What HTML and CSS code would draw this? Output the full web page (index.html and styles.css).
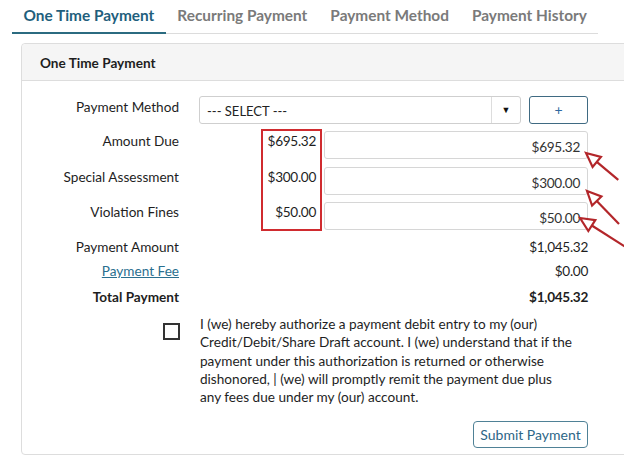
FILE: index.html
```html
<!DOCTYPE html>
<html lang="en">
<head>
<meta charset="utf-8">
<title>One Time Payment</title>
<link rel="stylesheet" href="styles.css">
</head>
<body>
<div class="page">
  <nav class="tabs">
    <a class="tab active" href="#">One Time Payment</a>
    <a class="tab" href="#">Recurring Payment</a>
    <a class="tab" href="#">Payment Method</a>
    <a class="tab" href="#">Payment History</a>
  </nav>

  <section class="panel">
    <header class="panel-head">One Time Payment</header>
    <div class="panel-body">
      <div class="form">
        <div class="label r1">Payment Method</div>
        <div class="method r1">
          <div class="select">
            <span class="select-text">--- SELECT ---</span>
            <span class="select-arrow">&#9660;</span>
          </div>
          <button class="btn-add" type="button">+</button>
        </div>

        <div class="label r2">Amount Due</div>
        <div class="value num r2">$695.32</div>
        <div class="input num r2">$695.32</div>

        <div class="label r3">Special Assessment</div>
        <div class="value num r3">$300.00</div>
        <div class="input num r3">$300.00</div>

        <div class="label r4">Violation Fines</div>
        <div class="value num r4">$50.00</div>
        <div class="input num r4">$50.00</div>

        <div class="highlight"></div>

        <div class="label r5">Payment Amount</div>
        <div class="total num r5">$1,045.32</div>

        <div class="label r6"><a class="link" href="#">Payment Fee</a></div>
        <div class="total num r6">$0.00</div>

        <div class="label strong r7">Total Payment</div>
        <div class="total num strong r7">$1,045.32</div>
      </div>

      <div class="consent">
        <div class="check-col"><span class="checkbox"></span></div>
        <p class="consent-text">I (we) hereby authorize a payment debit entry to my (our)<br>Credit/Debit/Share Draft account. I (we) understand that if the<br>payment under this authorization is returned or otherwise<br>dishonored, | (we) will promptly remit the payment due plus<br>any fees due under my (our) account.</p>
      </div>

      <div class="actions">
        <button class="btn-submit" type="button">Submit Payment</button>
      </div>
    </div>
  </section>

  <svg class="annotations" width="624" height="458" viewBox="0 0 624 458" aria-hidden="true">
    <g fill="#fff" stroke="#b3262a" stroke-width="2.2" stroke-linejoin="miter">
      <g transform="translate(586 153) rotate(39.8)">
        <line x1="14" y1="0" x2="42" y2="0"/>
        <polygon points="0,0 14,-6.5 14,6.5"/>
      </g>
      <g transform="translate(587 191) rotate(45.9)">
        <line x1="14" y1="0" x2="46" y2="0"/>
        <polygon points="0,0 14,-6.5 14,6.5"/>
      </g>
      <g transform="translate(580 218) rotate(32.5)">
        <line x1="14" y1="0" x2="60" y2="0"/>
        <polygon points="0,0 14,-6.5 14,6.5"/>
      </g>
    </g>
  </svg>
</div>
</body>
</html>
```

FILE: styles.css
```css
* { box-sizing: border-box; }

html, body {
  margin: 0;
  padding: 0;
  overflow: hidden;
  background: #ffffff;
}

body {
  font-family: "Lato", "Open Sans", "Liberation Sans", sans-serif;
  font-size: 13.6px;
  color: #1e1e1e;
}

.page {
  position: relative;
  width: 624px;
  height: 458px;
  overflow: hidden;
}

/* Tabs */
.tabs {
  display: flex;
  margin-left: 12px;
  width: 586px;
  padding-top: 5px;
  border-bottom: 1px solid #dcdcdc;
  white-space: nowrap;
}

.tab {
  display: block;
  flex: none;
  padding: 0 11.5px 7px;
  line-height: 20px;
  font-size: 15.4px;
  font-weight: 700;
  color: #7a7a7a;
  text-decoration: none;
  border-bottom: 2px solid transparent;
  margin-bottom: -1px;
}

.tab.active {
  color: #1f5f7d;
  border-bottom-color: #2b6b80;
}

/* Panel */
.panel {
  margin: 9px 0 0 21px;
  width: 640px;
  border: 1px solid #dddddd;
  border-radius: 4px;
  background: #ffffff;
}

.panel-head {
  padding: 9px 18px 7px;
  line-height: 20px;
  font-weight: 700;
  font-size: 13.6px;
  background: #f5f5f5;
  border-bottom: 1px solid #dddddd;
  border-radius: 4px 4px 0 0;
}

.panel-body {
  padding: 15px 0 6px;
}

/* Form grid */
.form {
  display: grid;
  width: 566px;
  grid-template-columns: 175px 123px 264px;
  grid-template-rows: 35px 36px 35px 35px 24px 26px 20px;
  column-gap: 2px;
  line-height: 20px;
}

.r1 { grid-row: 1; }
.r2 { grid-row: 2; }
.r3 { grid-row: 3; }
.r4 { grid-row: 4; }
.r5 { grid-row: 5; }
.r6 { grid-row: 6; }
.r7 { grid-row: 7; }

.label {
  grid-column: 1;
  text-align: right;
  padding-right: 18px;
}

.label.r1 { padding-top: 1px; }

.strong { font-weight: 700; }

.num { letter-spacing: -0.3px; }

.link {
  color: #2a6f8f;
  text-decoration: underline;
}

.method {
  grid-column: 2 / 4;
  display: flex;
  gap: 8px;
  height: 28px;
}

.select {
  flex: 1;
  display: flex;
  align-items: center;
  border: 1px solid #cfcfcf;
  border-radius: 3px;
  background: #ffffff;
}

.select-text {
  flex: 1;
  padding-left: 7px;
  padding-top: 2px;
  font-size: 13px;
  color: #222222;
}

.select-arrow {
  width: 29px;
  height: 100%;
  border-left: 1px solid #dddddd;
  display: flex;
  align-items: center;
  justify-content: center;
  font-size: 9px;
  color: #111111;
}

.btn-add {
  width: 59px;
  height: 28px;
  padding: 0;
  border: 1px solid #3f6a82;
  border-radius: 3px;
  background: #ffffff;
  color: #2f68a0;
  font-family: inherit;
  font-size: 14px;
  line-height: 1;
}

.value {
  grid-column: 2;
  text-align: right;
  padding-right: 6px;
}

.input {
  grid-column: 3;
  height: 28px;
  padding: 5px 7px 0 0;
  text-align: right;
  border: 1px solid #d6d6d6;
  border-radius: 3px;
  color: #333333;
}

.highlight {
  grid-column: 2;
  grid-row: 2 / 5;
  justify-self: end;
  width: 61px;
  margin: -2px 0 6px;
  border: 2px solid #d02b2f;
}

.total {
  grid-column: 2 / 4;
  text-align: right;
}

/* Consent */
.consent {
  display: flex;
  gap: 20px;
  margin-top: 8px;
}

.check-col {
  width: 158px;
  display: flex;
  justify-content: flex-end;
  padding-top: 8px;
}

.checkbox {
  display: block;
  width: 17px;
  height: 17px;
  border: 2px solid #333333;
  background: #ffffff;
}

.consent-text {
  margin: 0;
  line-height: 18.25px;
  color: #1e1e1e;
  white-space: nowrap;
}

/* Actions */
.actions {
  width: 566px;
  display: flex;
  justify-content: flex-end;
  margin-top: 15px;
}

.btn-submit {
  width: 115px;
  height: 27px;
  padding: 0;
  border: 1px solid #4f8196;
  border-radius: 4px;
  background: #ffffff;
  color: #2d6687;
  font-family: inherit;
  font-size: 14px;
}

/* Annotation overlay */
.annotations {
  position: absolute;
  left: 0;
  top: 0;
  pointer-events: none;
}
```
